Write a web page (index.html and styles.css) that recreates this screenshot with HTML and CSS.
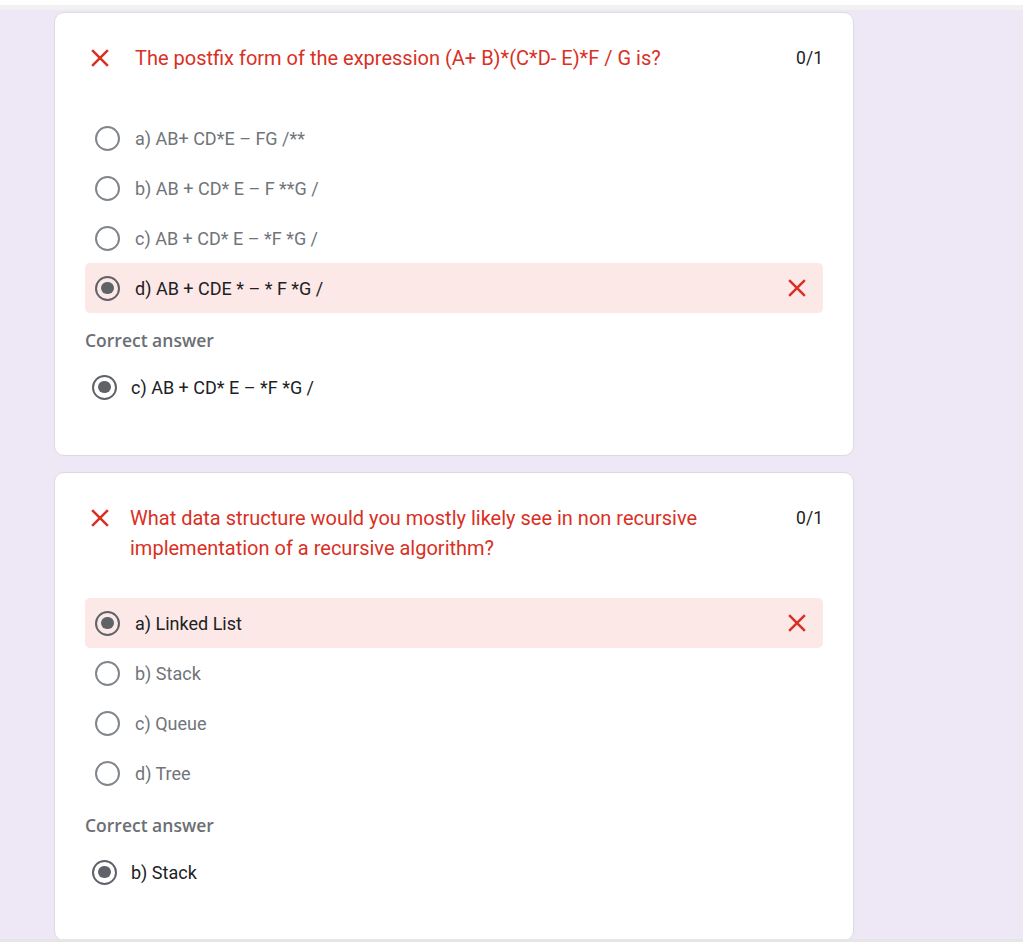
FILE: index.html
```html
<!DOCTYPE html>
<html>
<head>
<meta charset="utf-8">
<link rel="stylesheet" href="styles.css">
</head>
<body>
<div class="topbar"></div>
<main class="list">
  <section class="card">
    <div class="qhead q1">
      <svg class="xicon" viewBox="0 0 24 24"><path d="M19 6.41L17.59 5 12 10.59 6.41 5 5 6.41 10.59 12 5 17.59 6.41 19 12 13.41 17.59 19 19 17.59 13.41 12z"/></svg>
      <div class="qtitle t1">The postfix form of the expression (A+ B)*(C*D- E)*F / G is?</div>
      <div class="score">0/1</div>
    </div>
    <div class="options opts1">
      <div class="opt"><span class="radio"></span><span class="otext">a) AB+ CD*E – FG /**</span></div>
      <div class="opt"><span class="radio"></span><span class="otext">b) AB + CD* E – F **G /</span></div>
      <div class="opt"><span class="radio"></span><span class="otext">c) AB + CD* E – *F *G /</span></div>
      <div class="opt wrong"><span class="radio on"></span><span class="otext">d) AB + CDE * – * F *G /</span>
        <svg class="xicon right" viewBox="0 0 24 24"><path d="M19 6.41L17.59 5 12 10.59 6.41 5 5 6.41 10.59 12 5 17.59 6.41 19 12 13.41 17.59 19 19 17.59 13.41 12z"/></svg>
      </div>
    </div>
    <div class="clabel">Correct answer</div>
    <div class="answer"><span class="radio on"></span><span class="atext">c) AB + CD* E – *F *G /</span></div>
  </section>

  <section class="card">
    <div class="qhead">
      <svg class="xicon" viewBox="0 0 24 24"><path d="M19 6.41L17.59 5 12 10.59 6.41 5 5 6.41 10.59 12 5 17.59 6.41 19 12 13.41 17.59 19 19 17.59 13.41 12z"/></svg>
      <div class="qtitle t2">What data structure would you mostly likely see in non recursive implementation of a recursive algorithm?</div>
      <div class="score">0/1</div>
    </div>
    <div class="options opts2">
      <div class="opt wrong"><span class="radio on"></span><span class="otext">a) Linked List</span>
        <svg class="xicon right" viewBox="0 0 24 24"><path d="M19 6.41L17.59 5 12 10.59 6.41 5 5 6.41 10.59 12 5 17.59 6.41 19 12 13.41 17.59 19 19 17.59 13.41 12z"/></svg>
      </div>
      <div class="opt"><span class="radio"></span><span class="otext">b) Stack</span></div>
      <div class="opt"><span class="radio"></span><span class="otext">c) Queue</span></div>
      <div class="opt"><span class="radio"></span><span class="otext">d) Tree</span></div>
    </div>
    <div class="clabel">Correct answer</div>
    <div class="answer"><span class="radio on"></span><span class="atext">b) Stack</span></div>
  </section>
</main>
<div class="bottombar"></div>
</body>
</html>
```

FILE: styles.css
```css
* { box-sizing: border-box; }
html, body { margin: 0; padding: 0; }
body {
  background: #ede7f6;
  font-family: Roboto, "Liberation Sans", Arial, sans-serif;
  height: 942px;
  overflow: hidden;
  position: relative;
}
.topbar {
  height: 10px;
  background: #f1f1f1;
  border-top: 5px solid #ffffff;
}
.list {
  padding: 2px 0 0 54px;
  display: flex;
  flex-direction: column;
  gap: 16px;
}
.card {
  width: 800px;
  background: #fff;
  border: 1px solid #dadce0;
  border-radius: 10px;
  padding: 30px 30px 0 30px;
}
.qhead {
  display: flex;
  align-items: flex-start;
}
.xicon {
  width: 30px;
  height: 30px;
  fill: #d93025;
  flex: none;
}
.qtitle {
  flex: 1;
  color: #d93025;
  font-size: 20px;
  line-height: 30px;
  padding-right: 60px;
}
.t1 { margin-left: 20px; }
.t2 { margin-left: 15px; }
.score {
  color: #202124;
  font-size: 17.5px;
  line-height: 30px;
  flex: none;
}
.options { display: flex; flex-direction: column; }
.opts1 { margin-top: 40px; }
.opts2 { margin-top: 35px; }
.opt {
  height: 50px;
  display: flex;
  align-items: center;
  padding: 0 11px 0 10px;
  border-radius: 5px;
}
.opt.wrong { background: #fce8e6; }
.radio {
  width: 25px;
  height: 25px;
  border-radius: 50%;
  border: 2.5px solid #80868b;
  flex: none;
  position: relative;
}
.radio.on { border-color: #5f6368; }
.radio.on::after {
  content: "";
  position: absolute;
  left: 50%;
  top: 50%;
  width: 12.5px;
  height: 12.5px;
  margin: -6.25px 0 0 -6.25px;
  border-radius: 50%;
  background: #5f6368;
}
.otext {
  margin-left: 15px;
  font-size: 18px;
  color: #70757a;
  flex: 1;
}
.wrong .otext { color: #202124; }
.xicon.right { margin-left: auto; }
.clabel {
  margin-top: 15px;
  height: 24px;
  line-height: 24px;
  font-family: "Open Sans", Roboto, sans-serif;
  font-weight: 600;
  font-size: 17.5px;
  color: #6b6f74;
}
.answer {
  display: flex;
  align-items: center;
  height: 50px;
  margin-top: 10px;
  margin-bottom: 43px;
  padding-left: 7px;
}
.atext {
  margin-left: 14px;
  font-size: 18px;
  color: #202124;
}
.bottombar {
  position: absolute;
  left: 0;
  right: 0;
  bottom: 0;
  height: 3px;
  background: #e6e6e6;
}
```
